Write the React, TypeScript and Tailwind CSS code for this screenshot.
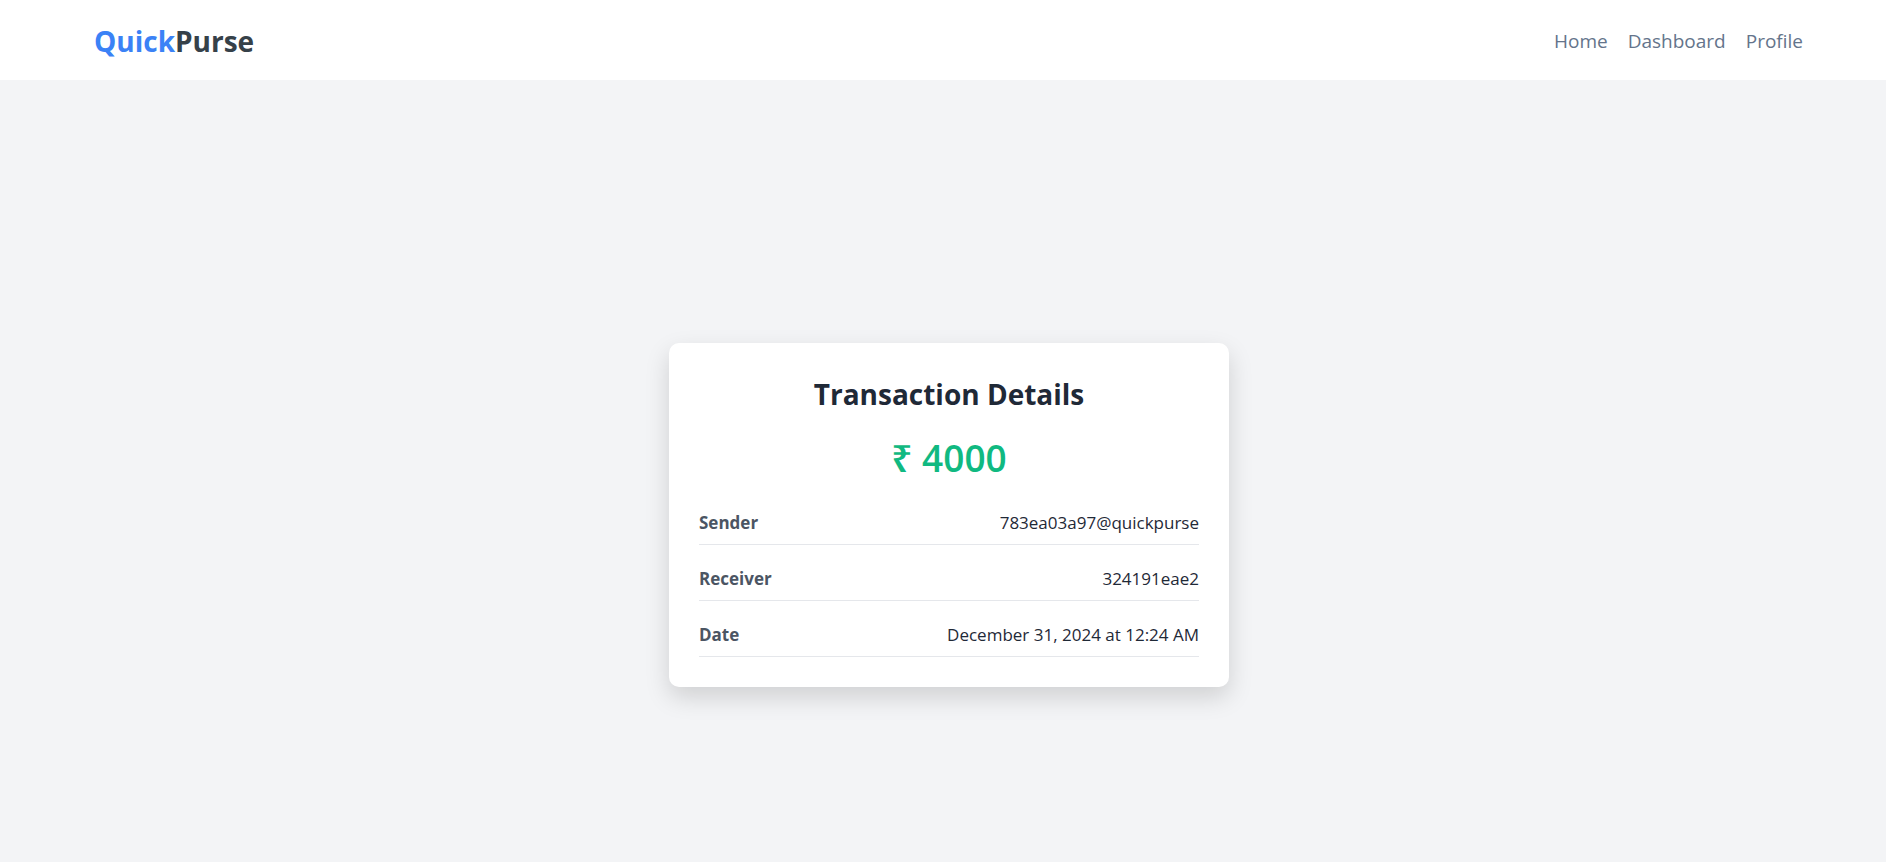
const navItems = ["Home", "Dashboard", "Profile"];

const details = [
  { label: "Sender", value: "783ea03a97@quickpurse" },
  { label: "Receiver", value: "324191eae2" },
  { label: "Date", value: "December 31, 2024 at 12:24 AM" },
];

export default function App() {
  return (
    <div className="flex min-h-screen flex-col bg-[#f3f4f6] font-['Open_Sans','Noto_Sans',sans-serif]">
      <header className="flex h-20 items-center justify-between bg-white pt-[2px] pr-[83px] pl-[94px]">
        <a href="#" className="text-[28px] leading-10 font-bold text-[#364149]">
          <span className="text-[#3b82f6]">Quick</span>Purse
        </a>
        <nav className="flex gap-5 text-[19px] leading-7 text-[#64748b]">
          {navItems.map((item) => (
            <a key={item} href="#">
              {item}
            </a>
          ))}
        </nav>
      </header>
      <main className="flex flex-1 items-center justify-center pt-[87px] pl-3">
        <section className="w-full max-w-[560px] rounded-[10px] bg-white p-[30px] shadow-[0_10px_25px_rgba(0,0,0,0.15)]">
          <h1 className="text-center text-[28px] leading-[42px] font-bold text-[#1f2937]">
            Transaction Details
          </h1>
          <p className="mt-4 text-center text-[37px] leading-[54px] font-semibold text-[#10b981]">
            ₹ 4000
          </p>
          <dl className="mt-[26px] flex flex-col gap-[22px] text-[17px] leading-6">
            {details.map(({ label, value }) => (
              <div
                key={label}
                className="flex justify-between border-b border-[#e5e7eb] pb-[9px]"
              >
                <dt className="font-bold text-[#4b5563]">{label}</dt>
                <dd className="text-[#1f2937]">{value}</dd>
              </div>
            ))}
          </dl>
        </section>
      </main>
    </div>
  );
}
